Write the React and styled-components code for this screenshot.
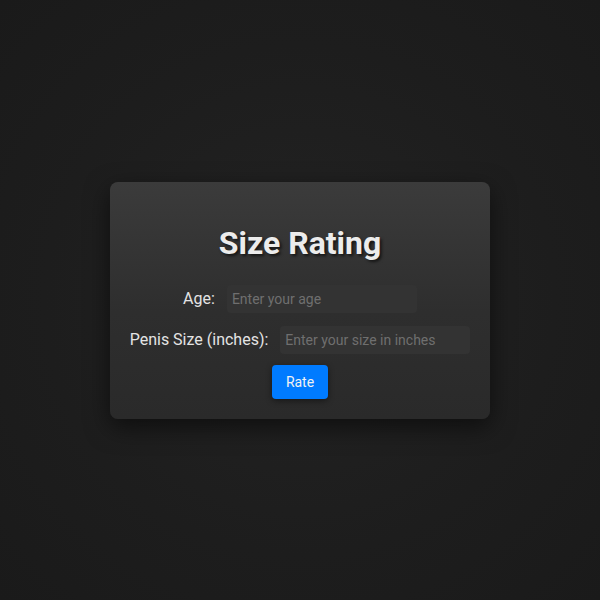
import React from "react";
import styled, { createGlobalStyle } from "styled-components";

const GlobalStyle = createGlobalStyle`
  html, body {
    margin: 0;
    height: 100%;
  }
  body {
    background: radial-gradient(circle at 50% 50%, #232323 0%, #1d1d1d 60%, #1a1a1a 100%);
    font-family: Roboto, "Liberation Sans", sans-serif;
    color: #e6e6e6;
  }
`;

export default function App() {
  return (
    <>
      <GlobalStyle />
      <Page>
        <Card>
          <Title>Size Rating</Title>
          <Field>
            <Label htmlFor="age">Age:</Label>
            <Input id="age" type="number" placeholder="Enter your age" />
          </Field>
          <Field>
            <Label htmlFor="size">Penis Size (inches):</Label>
            <Input id="size" type="number" placeholder="Enter your size in inches" />
          </Field>
          <Button type="button">Rate</Button>
        </Card>
      </Page>
    </>
  );
}

const Page = styled.main`
  height: 100vh;
  display: flex;
  align-items: center;
  justify-content: center;
`;

const Card = styled.section`
  width: 380px;
  box-sizing: border-box;
  padding: 20px;
  border-radius: 8px;
  background: linear-gradient(180deg, #3b3b3b 0%, #2e2e2e 55%, #2a2a2a 100%);
  box-shadow: 0 8px 24px rgba(0, 0, 0, 0.55);
  display: flex;
  flex-direction: column;
  align-items: center;
`;

const Title = styled.h1`
  font-size: 32px;
  font-weight: 700;
  margin: 23px 0 23px;
  line-height: 37px;
  color: #ececec;
  text-shadow: 2px 2px 3px rgba(0, 0, 0, 0.6);
`;

const Field = styled.div`
  display: flex;
  align-items: center;
  gap: 12px;
  margin-bottom: 13px;
`;

const Label = styled.label`
  font-size: 16px;
  color: #e4e4e4;
  white-space: nowrap;
`;

const Input = styled.input`
  width: 190px;
  flex-shrink: 0;
  height: 28px;
  box-sizing: border-box;
  padding: 0 5px;
  border: none;
  border-radius: 4px;
  background: #333333;
  color: #e4e4e4;
  font-family: Roboto, "Liberation Sans", sans-serif;
  font-size: 14px;
  outline: none;
  -moz-appearance: textfield;
  &::-webkit-outer-spin-button,
  &::-webkit-inner-spin-button {
    -webkit-appearance: none;
    margin: 0;
  }
  &::placeholder {
    color: #6f6f6f;
  }
`;

const Button = styled.button`
  margin-top: -2px;
  height: 34px;
  padding: 0 14px;
  border: none;
  border-radius: 4px;
  background: #007bff;
  color: #f2f2f2;
  font-family: Roboto, "Liberation Sans", sans-serif;
  font-size: 14px;
  box-shadow: 0 2px 6px rgba(0, 0, 0, 0.45);
  cursor: pointer;
`;
